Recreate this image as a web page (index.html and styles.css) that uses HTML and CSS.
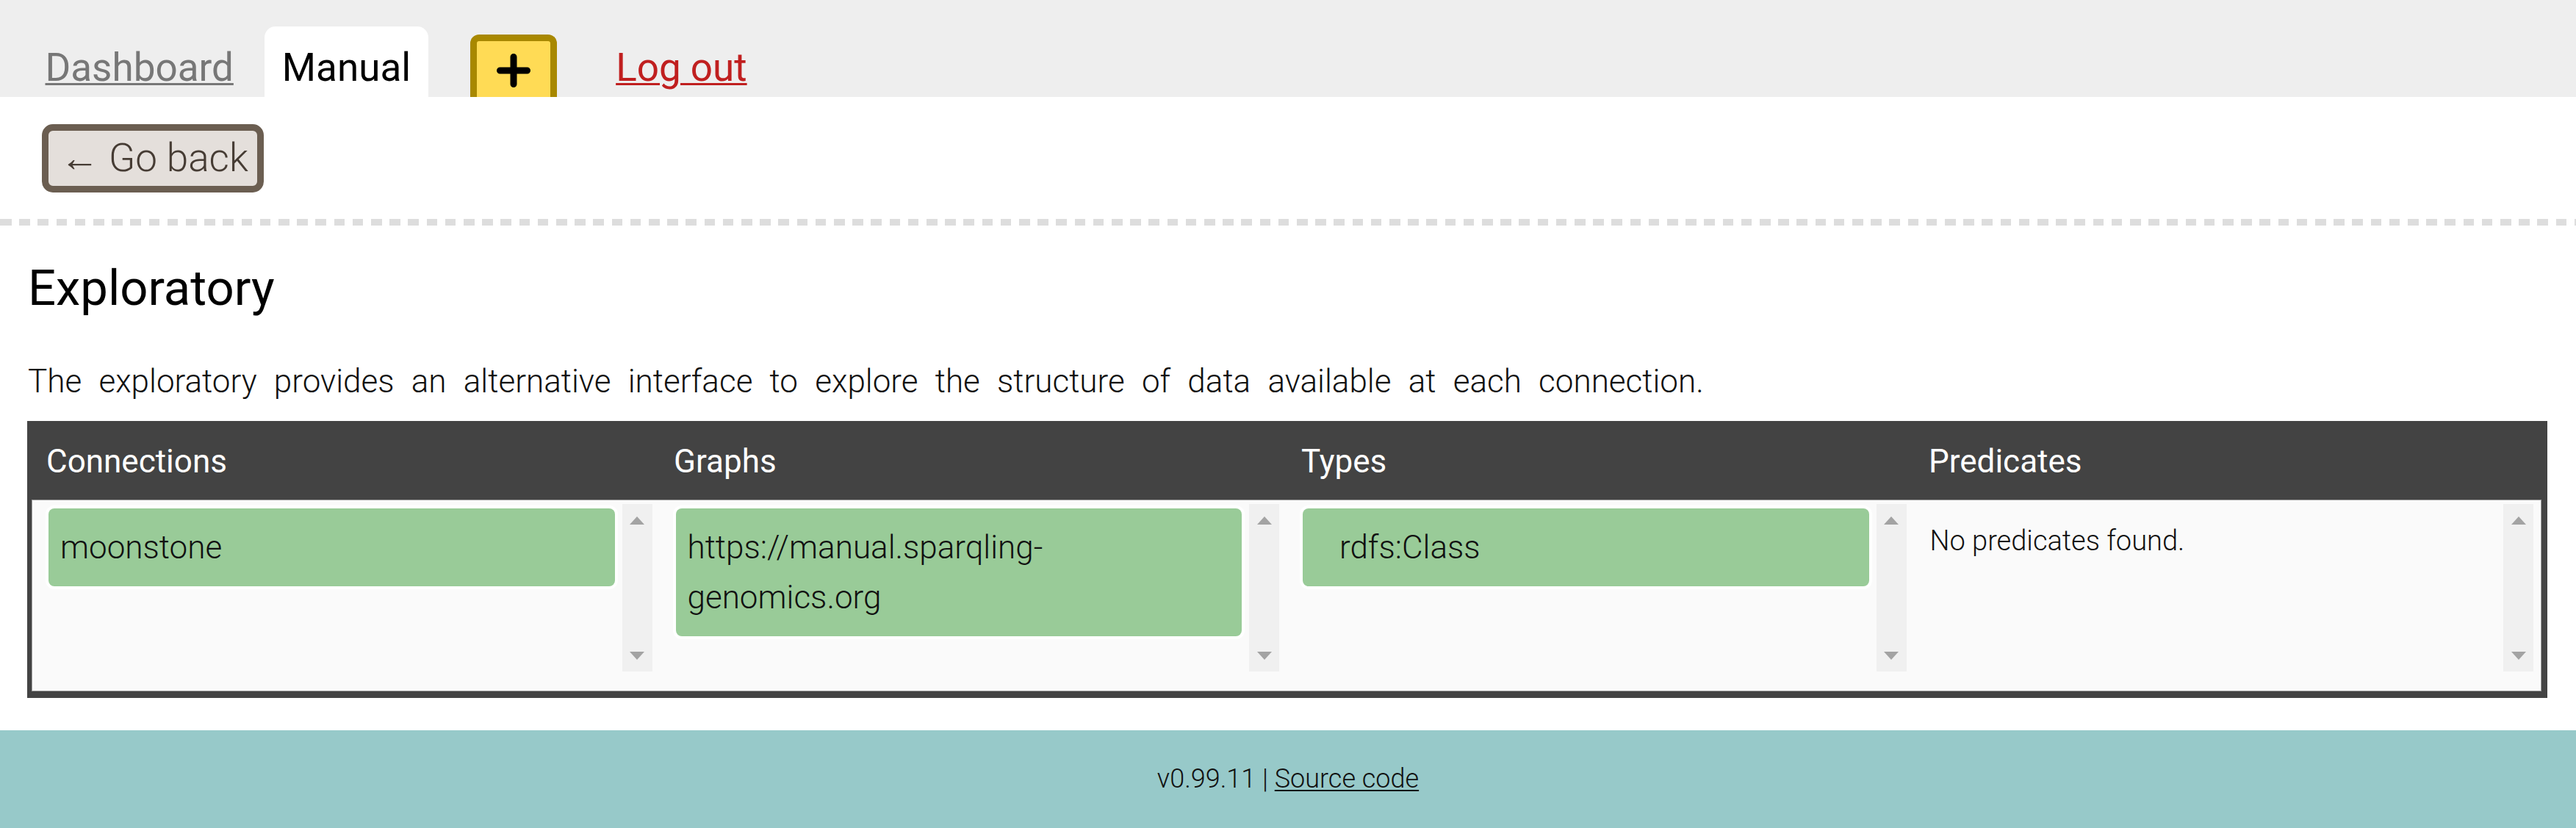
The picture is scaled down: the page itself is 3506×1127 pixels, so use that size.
FILE: index.html
```html
<!DOCTYPE html>
<html lang="en">
<head>
<meta charset="utf-8">
<title>Exploratory</title>
<link rel="stylesheet" href="styles.css">
</head>
<body>
<nav class="nav">
  <a class="tab" href="#">Dashboard</a>
  <a class="tab active" href="#">Manual</a>
  <span class="add-slot">
    <button class="add-btn" type="button" aria-label="Add">
      <svg width="46" height="46" viewBox="0 0 46 46"><path d="M23 4.5V41.5M4.5 23H41.5" stroke="#000" stroke-width="9" stroke-linecap="round" fill="none"/></svg>
    </button>
  </span>
  <a class="tab logout" href="#">Log out</a>
</nav>
<div class="toolbar">
  <button class="back-btn" type="button">&larr; Go back</button>
</div>
<hr class="divider">
<main class="content">
  <h1 class="title">Exploratory</h1>
  <p class="intro">The exploratory provides an alternative interface to explore the structure of data available at each connection.</p>
  <div class="explorer">
    <div class="explorer-head">
      <div class="head-cell">Connections</div>
      <div class="head-cell">Graphs</div>
      <div class="head-cell">Types</div>
      <div class="head-cell">Predicates</div>
    </div>
    <div class="explorer-body">
      <div class="body-cell">
        <div class="scroll-box">
          <div class="list">
            <div class="item">moonstone</div>
          </div>
          <div class="scrollbar">
            <svg width="20" height="11" viewBox="0 0 20 11"><polygon points="10,0 20,11 0,11" fill="#a3a3a3"/></svg>
            <svg width="20" height="11" viewBox="0 0 20 11"><polygon points="0,0 20,0 10,11" fill="#a3a3a3"/></svg>
          </div>
        </div>
      </div>
      <div class="body-cell">
        <div class="scroll-box">
          <div class="list">
            <div class="item">https://manual.sparqling-genomics.org</div>
          </div>
          <div class="scrollbar">
            <svg width="20" height="11" viewBox="0 0 20 11"><polygon points="10,0 20,11 0,11" fill="#a3a3a3"/></svg>
            <svg width="20" height="11" viewBox="0 0 20 11"><polygon points="0,0 20,0 10,11" fill="#a3a3a3"/></svg>
          </div>
        </div>
      </div>
      <div class="body-cell">
        <div class="scroll-box">
          <div class="list">
            <div class="item indent">rdfs:Class</div>
          </div>
          <div class="scrollbar">
            <svg width="20" height="11" viewBox="0 0 20 11"><polygon points="10,0 20,11 0,11" fill="#a3a3a3"/></svg>
            <svg width="20" height="11" viewBox="0 0 20 11"><polygon points="0,0 20,0 10,11" fill="#a3a3a3"/></svg>
          </div>
        </div>
      </div>
      <div class="body-cell">
        <div class="scroll-box">
          <div class="list">
            <div class="empty">No predicates found.</div>
          </div>
          <div class="scrollbar">
            <svg width="20" height="11" viewBox="0 0 20 11"><polygon points="10,0 20,11 0,11" fill="#a3a3a3"/></svg>
            <svg width="20" height="11" viewBox="0 0 20 11"><polygon points="0,0 20,0 10,11" fill="#a3a3a3"/></svg>
          </div>
        </div>
      </div>
    </div>
  </div>
</main>
<footer class="footer">v0.99.11 | <a href="#">Source code</a></footer>
</body>
</html>
```

FILE: styles.css
```css
html, body {
  margin: 0;
  padding: 0;
}
body {
  font-family: Roboto, "Liberation Sans", sans-serif;
  color: #111;
  background: #fff;
}

/* top navigation */
.nav {
  display: flex;
  align-items: flex-end;
  gap: 19px;
  height: 132px;
  box-sizing: border-box;
  padding-left: 38px;
  background: #eeeeee;
}
.tab {
  font-size: 53px;
  line-height: 62px;
  padding: 25px 23.5px 9px;
  color: #777777;
  text-decoration: underline;
  text-decoration-thickness: 3px;
  text-underline-offset: 3px;
}
.tab.active {
  background: #fff;
  color: #000;
  text-decoration: none;
  border-radius: 15px 15px 0 0;
}
.tab.logout {
  color: #c01f1f;
}
.add-slot {
  display: flex;
  margin: 0 38px;
}
.add-btn {
  width: 118px;
  height: 85px;
  box-sizing: border-box;
  margin: 0;
  border: 9px solid #a88800;
  border-bottom: 0;
  border-radius: 12px 12px 0 0;
  background: #ffdb55;
  padding: 17px 0 0;
  display: flex;
  justify-content: center;
  align-items: flex-start;
}

/* toolbar */
.toolbar {
  padding: 37px 0 36px 57px;
}
.back-btn {
  margin: 0;
  font-family: Roboto, "Liberation Sans", sans-serif;
  font-weight: 300;
  font-size: 53px;
  line-height: 75px;
  color: #463c34;
  background: #e4dfdb;
  border: 9px solid #6b5e51;
  border-radius: 15px;
  padding: 0 12px 0 16px;
}
.divider {
  margin: 0;
  border: 0;
  height: 9px;
  background: repeating-linear-gradient(90deg, #dddddd 0 14.5px, transparent 14.5px 25.2px);
  background-position: 1px 0;
}

/* content */
.content {
  padding: 0 39px 0 38px;
}
.title {
  margin: 45px 0 0;
  font-size: 67px;
  line-height: 80px;
  font-weight: 400;
  color: #000;
}
.intro {
  margin: 54px 0 0;
  font-size: 44px;
  line-height: 66px;
  font-weight: 300;
  word-spacing: 12.5px;
  color: #111;
}

/* explorer table */
.explorer {
  margin: 21px 0 0 -1px;
  background: #434343;
  padding: 0 8px 9px 6px;
}
.explorer-head {
  display: grid;
  grid-template-columns: repeat(4, 1fr);
}
.head-cell {
  color: #fff;
  font-size: 44px;
  line-height: 52px;
  padding: 29px 0 26px 20px;
}
.explorer-body {
  display: grid;
  grid-template-columns: repeat(4, 1fr);
  background: #fafafa;
  border: 1px solid #9d9d9d;
}
.body-cell {
  padding: 5px 10px 26px 18px;
}
.scroll-box {
  display: flex;
  height: 228px;
}
.list {
  flex: 1;
  min-width: 0;
}
.item {
  margin: 6px 10px 0 4px;
  padding: 19px 16px;
  background: #99cb98;
  border-radius: 8px;
  box-shadow: 0 0 0 4px #fff;
  font-size: 44px;
  line-height: 68px;
  font-weight: 300;
  color: #111;
}
.item.indent {
  padding-left: 50px;
}
.empty {
  padding: 28px 4px 0;
  font-size: 38px;
  line-height: 44px;
  font-weight: 300;
  color: #111;
}
.scrollbar {
  width: 41px;
  flex: none;
  background: #f0f0f0;
  display: flex;
  flex-direction: column;
  justify-content: space-between;
  align-items: center;
  padding: 17px 0 16px;
  box-sizing: border-box;
}
.scrollbar svg {
  display: block;
}

/* footer */
.footer {
  margin-top: 44px;
  background: #97c9c9;
  text-align: center;
  font-size: 36px;
  line-height: 42px;
  font-weight: 300;
  padding: 45px 0 46px;
  color: #111;
}
.footer a {
  color: #111;
  text-decoration: underline;
  text-decoration-thickness: 2px;
  text-underline-offset: 3px;
}
```
